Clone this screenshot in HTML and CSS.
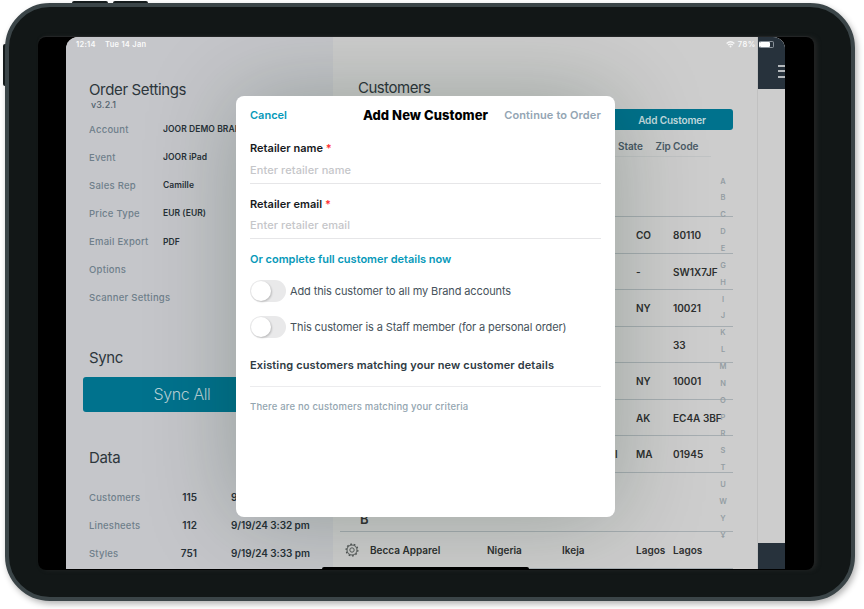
FILE: index.html
```
<!DOCTYPE html>
<html lang="en">
<head>
<meta charset="utf-8">
<title>Add New Customer</title>
<link rel="stylesheet" href="styles.css">
</head>
<body>
<div class="stage">
  <i class="key key-a"></i><i class="key key-b"></i><i class="key key-c"></i>
  <div class="device">
    <div class="screen">
      <div class="app">
        <aside class="sidebar">
          <h2 class="title">Order Settings</h2>
          <div class="version">v3.2.1</div>
          <dl class="settings">
            <div class="setting"><dt>Account</dt><dd class="wide">JOOR DEMO BRAND</dd></div>
            <div class="setting"><dt>Event</dt><dd>JOOR iPad</dd></div>
            <div class="setting"><dt>Sales Rep</dt><dd>Camille</dd></div>
            <div class="setting"><dt>Price Type</dt><dd>EUR (EUR)</dd></div>
            <div class="setting"><dt>Email Export</dt><dd>PDF</dd></div>
            <div class="setting"><dt>Options</dt></div>
            <div class="setting"><dt>Scanner Settings</dt></div>
          </dl>
          <h2 class="title sync-title">Sync</h2>
          <button class="sync">Sync All</button>
          <h2 class="title data-title">Data</h2>
          <div class="data">
            <div class="datum"><span>Customers</span><b>115</b><b>9/19/24 3:32 pm</b></div>
            <div class="datum"><span>Linesheets</span><b>112</b><b>9/19/24 3:32 pm</b></div>
            <div class="datum"><span>Styles</span><b>751</b><b>9/19/24 3:33 pm</b></div>
          </div>
        </aside>
        <main class="main">
          <h2 class="title">Customers</h2>
          <button class="add">Add Customer</button>
          <div class="head"><span>State</span><span>Zip Code</span></div>
          <div class="section"></div>
          <div class="row"><span class="state">CO</span><span>80110</span></div>
          <div class="row"><span class="state">-</span><span>SW1X7JF</span></div>
          <div class="row"><span class="state">NY</span><span>10021</span></div>
          <div class="row"><span class="state"></span><span>33</span></div>
          <div class="row"><span class="state">NY</span><span>10001</span></div>
          <div class="row"><span class="state">AK</span><span>EC4A 3BF</span></div>
          <div class="row"><span class="city-end">l</span><span class="state">MA</span><span>01945</span></div>
          <div class="section section-b">B</div>
          <div class="row">
            <svg class="gear" viewBox="0 0 14 14"><circle cx="7" cy="7" r="5"/><circle class="teeth" cx="7" cy="7" r="5.900" pathLength="20"/><circle cx="7" cy="7" r="2.200"/></svg>
            <span class="name">Becca Apparel</span><span class="country">Nigeria</span><span class="city">Ikeja</span><span class="state">Lagos</span><span>Lagos</span>
          </div>
          <div class="index"><i>A</i><i>B</i><i>C</i><i>D</i><i>E</i><i>G</i><i>H</i><i>I</i><i>J</i><i>K</i><i>L</i><i>M</i><i>N</i><i>O</i><i>P</i><i>R</i><i>S</i><i>T</i><i>U</i><i>W</i><i>Y</i><i>Ұ</i></div>
        </main>
        <div class="peek">
          <div class="peek-top"><i></i><i></i><i></i></div>
          <div class="peek-bottom"></div>
        </div>
        <div class="status">
          <span class="time">12:14</span><span class="date">Tue 14 Jan</span>
          <svg class="wifi" viewBox="0 0 9 7"><path d="M.6 2.500Q4.500-.9 8.400 2.500M2 4.100q2.500-2.100 5 0" /><circle cx="4.500" cy="5.600" r="1"/></svg>
          <span class="pct">78%</span>
          <span class="battery"><i></i></span>
        </div>
        <section class="modal">
          <header class="bar"><a>Cancel</a><h1>Add New Customer</h1><a class="next">Continue to Order</a></header>
          <div class="field"><label>Retailer name <em>*</em></label><p>Enter retailer name</p></div>
          <div class="field field-mail"><label>Retailer email <em>*</em></label><p>Enter retailer email</p></div>
          <a class="full">Or complete full customer details now</a>
          <div class="toggle"><i></i><span>Add this customer to all my Brand accounts</span></div>
          <div class="toggle"><i></i><span>This customer is a Staff member (for a personal order)</span></div>
          <h3>Existing customers matching your new customer details</h3>
          <p class="empty">There are no customers matching your criteria</p>
        </section>
        <div class="home"></div>
      </div>
    </div>
  </div>
</div>
</body>
</html>
```
FILE: styles.css
```
* { box-sizing: border-box; margin: 0; padding: 0; }
body { background: #fff; font-family: Inter, "Liberation Sans", sans-serif; width: 864px; height: 609px; overflow: hidden; }
i, em { font-style: normal; }
button { border: 0; font-family: inherit; display: block; }
.stage { position: relative; padding: 3px 0 0 5px; height: 609px; }
.key { position: absolute; background: #161d1e; }
.key-a { left: 72px; top: 1px; width: 36px; height: 4px; border-radius: 2px 2px 0 0; }
.key-b { left: 113px; top: 1px; width: 35px; height: 4px; border-radius: 2px 2px 0 0; }
.key-c { left: 3px; top: 44px; width: 4px; height: 42px; border-radius: 2px 0 0 2px; }
.device { position: relative; width: 850px; height: 598px; border: 4px solid #3b4548; border-radius: 45px; background: #121717; padding: 30px 0 0 29px; box-shadow: 2px 3px 6px rgba(0,0,0,.3); }
.screen { width: 776px; height: 533px; background: #000; border-radius: 8px; padding-left: 28px; box-shadow: 0 -1px 1px #242627, 3px 0 4px #232525; overflow: hidden; }
.app { position: relative; width: 719px; height: 532px; display: flex; background: #cdcdcd; overflow: hidden; border-radius: 12px 12px 0 0; }
.sidebar { width: 267px; height: 533px; background: #c5c6ca; padding: 44px 0 0 17px; flex: none; }
.title { font-size: 15px; line-height: 18px; font-weight: 400; color: #2d363c; padding-left: 6px; letter-spacing: -.35px; }
.version { font-size: 9px; line-height: 12px; color: #52626d; padding-left: 8px; font-weight: 500; letter-spacing: .1px; }
.settings { margin-top: 4px; padding-left: 6px; }
.setting { display: flex; height: 28.150px; align-items: center; font-size: 9.500px; white-space: nowrap; }
.setting dt { width: 74px; color: #6f7f8a; font-weight: 500; letter-spacing: .25px; }
.setting dd { color: #273138; font-weight: 600; font-size: 8.500px; letter-spacing: .07px; }
.sync-title { margin-top: 37px; }
.sync { margin-top: 10px; width: 198px; height: 35px; border-radius: 3px; background: #00728d; color: #b7d0d6; font-size: 16px; font-weight: 300; letter-spacing: -.4px; }
.data-title { margin-top: 37px; }
.data { margin-top: 16px; padding-left: 6px; }
.datum { display: grid; grid-template-columns: 77px 45px 1fr; height: 28.100px; align-items: center; font-size: 10px; white-space: nowrap; }
.datum span { color: #6f7f8a; font-weight: 500; letter-spacing: .2px; font-size: 9.500px; }
.datum b { color: #273138; font-weight: 600; }
.datum b:nth-child(2) { text-align: right; padding-right: 14px; }
.datum b:nth-child(3) { padding-left: 20px; letter-spacing: -.07px; }
.main { position: relative; width: 425px; flex: none; padding: 42px 24px 0 7px; border-right: 1px solid #c1c1c1; height: 533px; }
.main .title { padding-left: 18px; letter-spacing: -.5px; }
.add { margin: 12px 0 0 260px; width: 133px; height: 21px; border-radius: 3px; background: #00728d; color: #c2dade; font-size: 10px; font-weight: 600; padding-left: 11px; text-align: center; letter-spacing: -.15px; }
.head { width: 371px; height: 27px; border-bottom: 1px solid #c0c3c4; display: flex; align-items: center; padding: 6px 0 0 278px; font-size: 10px; font-weight: 600; color: #4a5a66; letter-spacing: -.08px; }
.head span { white-space: nowrap; }
.head span:first-child { width: 37.500px; }
.section { height: 60px; border-bottom: 1px solid #a6adb1; }
.section-b { height: 59.500px; padding: 40px 0 0 20px; font-size: 13px; line-height: 13px; font-weight: 600; color: #333; }
.row { height: 36.500px; padding-top: 1px; border-bottom: 1px solid #a6adb1; display: flex; align-items: center; justify-content: flex-end; font-size: 10px; font-weight: 600; color: #2d3030; white-space: nowrap; }
.row span { width: 60px; flex: none; }
.row .state { width: 37px; }
.row .name { width: 117px; letter-spacing: 0; }
.row .country { width: 75px; }
.row .city { width: 74px; }
.row .city-end { width: 21px; }
.gear { width: 14px; height: 14px; margin-right: 11px; flex: none; fill: none; stroke: #4a4e4e; stroke-width: .9; }
.teeth { stroke-dasharray: 1 1; stroke-width: 1.100; }
.index { position: absolute; left: 384px; top: 135.500px; width: 12px; display: flex; flex-direction: column; }
.index i { height: 16.860px; line-height: 17px; font-size: 7.500px; color: #949da3; text-align: center; font-weight: 600; }
.peek { width: 27px; height: 532px; flex: none; display: flex; flex-direction: column; background: #cdcdcd; }
.peek-top { height: 52px; background: #27323c; padding: 28px 0 0 20px; }
.peek-top i { display: block; height: 2px; margin-bottom: 3.300px; background: #b6babd; }
.peek-bottom { height: 26px; margin-top: auto; background: #27323c; }
.status { position: absolute; left: 10px; top: 3px; width: 698px; display: flex; align-items: center; height: 9px; color: #fafafa; font-size: 7.500px; font-weight: 600; white-space: nowrap; letter-spacing: .27px; }
.time { width: 29px; }
.wifi { width: 9px; height: 7px; margin-left: auto; margin-right: 3px; fill: none; stroke: #f5f5f5; stroke-width: 1.300; }
.wifi circle { fill: #f5f5f5; stroke: none; }
.pct { letter-spacing: .6px; }
.battery { width: 15px; height: 7px; border: 1px solid #89929a; border-left-color: #fff; border-radius: 2px; margin-left: 3px; }
.battery i { display: block; width: 10px; height: 5px; background: #fff; border-radius: 1px; }
.modal { position: absolute; left: 170px; top: 58.500px; width: 379px; height: 421.500px; border-radius: 8px; background: #fff; box-shadow: 0 0 90px rgba(0,35,15,.25); padding: 0 14px; }
.bar { display: grid; grid-template-columns: 1fr auto 1fr; align-items: center; height: 39.500px; font-size: 11px; font-weight: 600; white-space: nowrap; color: #0799b9; }
.bar h1 { font-size: 13px; font-weight: 800; color: #000; letter-spacing: .06px; }
.next { color: #93a5b3; text-align: right; letter-spacing: .13px; }
.field { height: 48.500px; padding-top: 5px; border-bottom: 1px solid #e6e6e8; font-size: 11px; }
.field-mail { height: 55.500px; padding-top: 12.500px; }
.field label { display: block; line-height: 16px; font-weight: 600; color: #16191c; letter-spacing: .03px; }
.field em { color: #f33; }
.field p { color: #c5c6c9; line-height: 16px; margin-top: 6px; font-weight: 500; letter-spacing: .09px; }
.field-mail p { margin-top: 5px; }
.full { display: block; margin-top: 12px; height: 16px; line-height: 16px; font-size: 11px; font-weight: 600; color: #0799b9; white-space: nowrap; }
.toggle { display: flex; align-items: center; height: 36px; font-size: 11px; color: #46525b; white-space: nowrap; letter-spacing: -.115px; }
.full + .toggle { margin-top: 5.800px; }
.toggle i { width: 36px; height: 22px; border-radius: 11px; background: #e9e9ea; padding: 1px; margin-right: 4px; flex: none; }
.toggle i::before { content: ""; display: block; width: 20px; height: 20px; border-radius: 50%; background: #fff; box-shadow: 1px 1px 2px rgba(0,0,0,.2); }
.modal h3 { margin-top: 12px; height: 30px; line-height: 16px; border-bottom: 1px solid #ececee; font-size: 11px; font-weight: 600; color: #2e3a43; white-space: nowrap; letter-spacing: .13px; }
.empty { margin-top: 13.500px; line-height: 14px; font-size: 9.500px; font-weight: 500; color: #93a5b0; white-space: nowrap; letter-spacing: .18px; }
.home { position: absolute; left: 256px; bottom: 0; width: 207px; height: 2px; background: #000; border-radius: 2px 2px 0 0; }
```
